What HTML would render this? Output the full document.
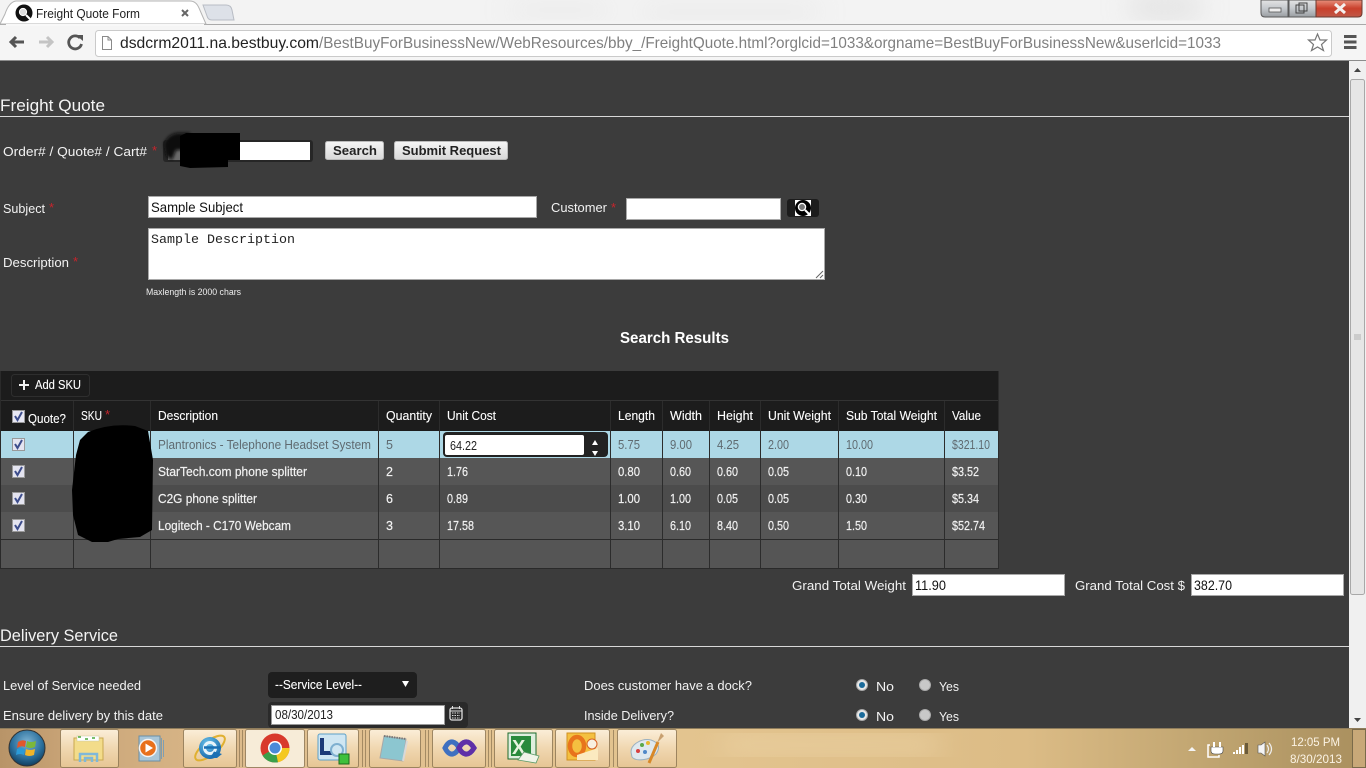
<!DOCTYPE html>
<html><head><meta charset="utf-8"><title>Freight Quote Form</title>
<style>
html,body{margin:0;padding:0;width:1366px;height:768px;overflow:hidden;background:#3c3c3c}
svg{display:block}
text{font-family:"Liberation Sans",sans-serif;font-size:13px;fill:#f2f2f2}
.h{font-size:17px;fill:#f4f4f4}
.r{fill:#c8242c;font-size:13px}
.t{font-size:12.5px;fill:#f2f2f2;stroke:#f2f2f2;stroke-width:.18px}
.b{font-size:12.5px;fill:#5f6a70}
.d{font-size:14px;fill:#111}
.m{font-size:12.5px;fill:#fff;stroke:#fff;stroke-width:.1px}
</style></head><body>
<svg width="1366" height="768" viewBox="0 0 1366 768" xmlns="http://www.w3.org/2000/svg">
<defs>
<linearGradient id="tb" x1="0" y1="0" x2="1" y2="0">
<stop offset="0" stop-color="#b89468"/><stop offset=".05" stop-color="#c9a477"/><stop offset=".2" stop-color="#e0bf90"/><stop offset=".5" stop-color="#e3c48f"/><stop offset=".75" stop-color="#dcbc86"/><stop offset=".9" stop-color="#bda26e"/><stop offset="1" stop-color="#a98f5e"/>
</linearGradient>
<linearGradient id="btn" x1="0" y1="0" x2="0" y2="1"><stop offset="0" stop-color="#fbeed8"/><stop offset=".5" stop-color="#f0d7b0"/><stop offset="1" stop-color="#e6c594"/></linearGradient>
<linearGradient id="gb" x1="0" y1="0" x2="0" y2="1"><stop offset="0" stop-color="#f6f6f6"/><stop offset="1" stop-color="#d8d8d8"/></linearGradient>
<linearGradient id="cl" x1="0" y1="0" x2="0" y2="1"><stop offset="0" stop-color="#e8907c"/><stop offset=".5" stop-color="#c9402c"/><stop offset="1" stop-color="#c05848"/></linearGradient>
<linearGradient id="wb" x1="0" y1="0" x2="0" y2="1"><stop offset="0" stop-color="#e4e4e4"/><stop offset=".5" stop-color="#c4c8cc"/><stop offset="1" stop-color="#9a9ea2"/></linearGradient>
<radialGradient id="orb" cx=".5" cy=".35" r=".7"><stop offset="0" stop-color="#7fb4d4"/><stop offset=".6" stop-color="#2a6f9c"/><stop offset="1" stop-color="#0c3350"/></radialGradient>
<radialGradient id="ie" cx=".4" cy=".3" r=".8"><stop offset="0" stop-color="#6cc4ec"/><stop offset="1" stop-color="#0e5fa4"/></radialGradient>
<filter id="bl"><feGaussianBlur stdDeviation="1.5"/></filter>
<filter id="bl2"><feGaussianBlur stdDeviation="14"/></filter>
</defs>

<!-- browser frame -->
<rect width="1366" height="61" fill="#f3f3f3"/>
<g filter="url(#bl2)" fill="#d8d8d8" opacity=".7">
<rect x="510" y="6" width="100" height="8"/><rect x="640" y="8" width="180" height="8"/><rect x="1130" y="-4" width="70" height="22"/>
</g>
<rect x="0" y="24" width="1366" height="1" fill="#a9a9a9"/>
<rect x="0" y="25" width="1366" height="35" fill="#f5f5f5"/>
<rect x="0" y="60" width="1366" height="1" fill="#8c8c8c"/>
<path d="M0 24L5 14Q9 2 16 1H190Q196 1 199 8L206 24Z" fill="#fff" stroke="#b4b4b4"/>
<rect x="6" y="24" width="198" height="2" fill="#f8f8f8"/>
<path d="M203 5H226Q231 5 232 10L234 20H212Q208 20 207 16Z" fill="#dde1e8" stroke="#b8bcc4"/>
<circle cx="24" cy="13" r="8.5" fill="#111"/><circle cx="23" cy="12" r="3.6" fill="#ddd" stroke="#fff"/><path d="M26 15L30 19" stroke="#fff" stroke-width="2"/>
<text x="36" y="18" style="font-size:12.5px;fill:#222" textLength="104" lengthAdjust="spacingAndGlyphs">Freight Quote Form</text>
<path d="M182 10L188 16M188 10L182 16" stroke="#666" stroke-width="2"/>

<!-- window buttons -->
<path d="M1261 0V13Q1261 17 1265 17H1288V0Z" fill="url(#wb)" stroke="#5a5a5a"/>
<rect x="1289" y="0" width="27" height="17" fill="url(#wb)" stroke="#5a5a5a"/>
<path d="M1316 0V17H1358Q1362 17 1362 13V0Z" fill="url(#cl)" stroke="#6a3a30"/>
<rect x="1269" y="8" width="12" height="4" fill="#eee" stroke="#555" stroke-width=".8"/>
<rect x="1296" y="5" width="8" height="8" fill="none" stroke="#444"/><rect x="1299" y="3" width="8" height="8" fill="none" stroke="#444"/>
<path d="M1335 4L1345 13M1345 4L1335 13" stroke="#f4f0ee" stroke-width="3"/>

<!-- toolbar -->
<path d="M24 42H11M16 37L11 42L16 47" fill="none" stroke="#555" stroke-width="3"/>
<path d="M39 42H52M47 37L52 42L47 47" fill="none" stroke="#c4c4c4" stroke-width="3"/>
<path d="M80 38A6.5 6.5 0 1 0 81.5 44" fill="none" stroke="#555" stroke-width="2.8"/><path d="M76 35H83V41Z" fill="#555"/>
<rect x="95.500" y="30.500" width="1236" height="26" rx="3" fill="#fff" stroke="#cacaca"/>
<path d="M102.500 36.500H108L111.500 40V49.500H102.500ZM108 36.500V40H111.500" fill="#fff" stroke="#8a8a8a"/>
<text x="120" y="48" style="font-size:16px;fill:#222" textLength="199" lengthAdjust="spacingAndGlyphs">dsdcrm2011.na.bestbuy.com</text>
<text x="319" y="48" style="font-size:16px;fill:#808080" textLength="902" lengthAdjust="spacingAndGlyphs">/BestBuyForBusinessNew/WebResources/bby_/FreightQuote.html?orglcid=1033&amp;orgname=BestBuyForBusinessNew&amp;userlcid=1033</text>
<path d="M1317.500 34L1320 40H1326.500L1321.500 44.500L1323.500 50.500L1317.500 47L1311.500 50.500L1313.500 44.500L1308.500 40H1315Z" fill="#fff" stroke="#777" stroke-width="1.200"/>
<path d="M1344 36.500H1356.500M1344 42H1356.500M1344 47.500H1356.500" stroke="#555" stroke-width="3"/>

<!-- page -->
<rect x="0" y="61" width="1349" height="667" fill="#3c3c3c"/>
<rect x="1349" y="61" width="17" height="667" fill="#f0f0f0"/>
<path d="M1354 72L1357.500 68L1361 72Z" fill="#444"/>
<rect x="1350.500" y="79.500" width="14" height="515" rx="2" fill="#e6e6e6" stroke="#a8a8a8"/>
<path d="M1354 335H1361M1354 337H1361M1354 339H1361" stroke="#b0b0b0"/>
<path d="M1354 718L1357.500 722L1361 718Z" fill="#444"/>

<text x="0" y="111" class="h" textLength="105" lengthAdjust="spacingAndGlyphs">Freight Quote</text>
<rect x="0" y="116" width="1349" height="1" fill="#d8d8d8"/>

<text x="3" y="156" textLength="144" lengthAdjust="spacingAndGlyphs">Order# / Quote# / Cart#</text>
<text x="152" y="155" class="r">*</text>
<rect x="163" y="140" width="150" height="22" rx="3" fill="#262626"/>
<rect x="168" y="142" width="142" height="18" fill="#fff"/>
<rect x="168" y="142" width="14" height="18" fill="#6a6a6a"/>
<path d="M164 144Q168 134 178 133H190V150H176L172 160L166 156Z" fill="#0a0a0a" filter="url(#bl)"/>
<path d="M180 136L186 133H240V160H228V167L190 168L180 166Z" fill="#000"/>

<rect x="325.500" y="141.500" width="58" height="18" rx="2" fill="url(#gb)" stroke="#bbb"/>
<text x="333" y="155" style="font-size:13px;font-weight:bold;fill:#222" textLength="44" lengthAdjust="spacingAndGlyphs">Search</text>
<rect x="394.500" y="141.500" width="113" height="18" rx="2" fill="url(#gb)" stroke="#bbb"/>
<text x="402" y="155" style="font-size:13px;font-weight:bold;fill:#222" textLength="99" lengthAdjust="spacingAndGlyphs">Submit Request</text>

<text x="3" y="213" textLength="42" lengthAdjust="spacingAndGlyphs">Subject</text><text x="49" y="212" class="r">*</text>
<rect x="148.500" y="196.500" width="388" height="21" fill="#fff" stroke="#a8a8a8"/>
<text x="151" y="212" class="d" textLength="92" lengthAdjust="spacingAndGlyphs">Sample Subject</text>
<text x="551" y="212" textLength="56" lengthAdjust="spacingAndGlyphs">Customer</text><text x="611" y="212" class="r">*</text>
<rect x="626.500" y="198.500" width="154" height="21" fill="#fff" stroke="#a8a8a8"/>
<rect x="787" y="199" width="32" height="18" rx="3" fill="#1c1c1c"/>
<rect x="795" y="200" width="16" height="16" fill="#fff"/>
<circle cx="803" cy="208" r="8" fill="#000"/><circle cx="802" cy="207" r="3.600" fill="#777" stroke="#fff" stroke-width="1.300"/><path d="M805 210L809 214" stroke="#fff" stroke-width="2"/>

<text x="3" y="267" textLength="66" lengthAdjust="spacingAndGlyphs">Description</text><text x="73" y="266" class="r">*</text>
<rect x="148.500" y="228.500" width="676" height="51" fill="#fff" stroke="#a8a8a8"/>
<text x="151" y="243" style="font-family:'Liberation Mono',monospace;font-size:13.330px;fill:#222">Sample Description</text>
<path d="M816 278L823 271M820 278L823 275" stroke="#666"/>
<text x="146" y="295" style="font-size:9.500px;fill:#eee" textLength="95" lengthAdjust="spacingAndGlyphs">Maxlength is 2000 chars</text>

<text x="620" y="343" style="font-size:16px;font-weight:bold;fill:#fff" textLength="109" lengthAdjust="spacingAndGlyphs">Search Results</text>

<!-- table -->
<rect x="0" y="371" width="999" height="198" fill="#2a2a2a"/>
<rect x="1" y="371" width="997" height="60" fill="#1c1c1c"/>
<rect x="1" y="400" width="997" height="1" fill="#333"/>
<rect x="11.500" y="374.500" width="78" height="22" rx="3" fill="#1c1c1c" stroke="#2e2e2e"/>
<path d="M24 380V390M19 385H29" stroke="#f0f0f0" stroke-width="2"/>
<text x="35" y="389" class="m" textLength="46" lengthAdjust="spacingAndGlyphs">Add SKU</text>

<rect x="1" y="431" width="997" height="27" fill="#add8e6"/>
<rect x="1" y="458" width="997" height="27" fill="#565656"/>
<rect x="1" y="485" width="997" height="27" fill="#4c4c4c"/>
<rect x="1" y="512" width="997" height="27" fill="#565656"/>
<rect x="1" y="539" width="997" height="1" fill="#2a2a2a"/>
<rect x="1" y="540" width="997" height="28" fill="#555"/>
<g stroke="#2c2c2c">
<path d="M73.500 401V568M150.500 401V568M378.500 401V568M439.500 401V568M610.500 401V568M662.500 401V568M709.500 401V568M760.500 401V568M838.500 401V568M944.500 401V568M998.500 371V568"/>
</g>

<!-- header -->
<g><rect x="12.500" y="410.500" width="12" height="12" fill="#e8e8f4" stroke="#999"/><path d="M15 416L17.500 420L22 412" fill="none" stroke="#3d4d8c" stroke-width="2"/></g>
<text x="28" y="423" class="m" textLength="38" lengthAdjust="spacingAndGlyphs">Quote?</text>
<text x="81" y="420" class="m" textLength="21" lengthAdjust="spacingAndGlyphs">SKU</text><text x="105" y="419" class="r">*</text>
<text x="158" y="420" class="m" textLength="60" lengthAdjust="spacingAndGlyphs">Description</text>
<text x="386" y="420" class="m" textLength="46" lengthAdjust="spacingAndGlyphs">Quantity</text>
<text x="447" y="420" class="m" textLength="49" lengthAdjust="spacingAndGlyphs">Unit Cost</text>
<text x="618" y="420" class="m" textLength="37" lengthAdjust="spacingAndGlyphs">Length</text>
<text x="670" y="420" class="m" textLength="32" lengthAdjust="spacingAndGlyphs">Width</text>
<text x="717" y="420" class="m" textLength="36" lengthAdjust="spacingAndGlyphs">Height</text>
<text x="768" y="420" class="m" textLength="63" lengthAdjust="spacingAndGlyphs">Unit Weight</text>
<text x="846" y="420" class="m" textLength="91" lengthAdjust="spacingAndGlyphs">Sub Total Weight</text>
<text x="952" y="420" class="m" textLength="29" lengthAdjust="spacingAndGlyphs">Value</text>

<!-- row checkboxes -->
<g fill="#e4e4f0" stroke="#999">
<rect x="12.500" y="438.500" width="12" height="12"/><rect x="12.500" y="465.500" width="12" height="12"/><rect x="12.500" y="492.500" width="12" height="12"/><rect x="12.500" y="519.500" width="12" height="12"/>
</g>
<g fill="none" stroke="#3d4d8c" stroke-width="2">
<path d="M15 444L17.500 448L22 440"/><path d="M15 471L17.500 475L22 467"/><path d="M15 498L17.500 502L22 494"/><path d="M15 525L17.500 529L22 521"/>
</g>

<!-- row 1 -->
<text x="158" y="449" class="b" textLength="213" lengthAdjust="spacingAndGlyphs">Plantronics - Telephone Headset System</text>
<text x="386" y="449" class="b">5</text>
<rect x="443" y="432" width="165" height="25" rx="4" fill="#222"/>
<rect x="445" y="435" width="139" height="20" rx="2" fill="#fff"/>
<text x="450" y="450" style="font-size:12.500px;fill:#222" textLength="27" lengthAdjust="spacingAndGlyphs">64.22</text>
<path d="M592 445L595 440L598 445ZM592 451L595 456L598 451Z" fill="#fff"/>
<text x="618" y="449" class="b" textLength="22" lengthAdjust="spacingAndGlyphs">5.75</text>
<text x="670" y="449" class="b" textLength="22" lengthAdjust="spacingAndGlyphs">9.00</text>
<text x="717" y="449" class="b" textLength="22" lengthAdjust="spacingAndGlyphs">4.25</text>
<text x="768" y="449" class="b" textLength="21" lengthAdjust="spacingAndGlyphs">2.00</text>
<text x="846" y="449" class="b" textLength="27" lengthAdjust="spacingAndGlyphs">10.00</text>
<text x="952" y="449" class="b" textLength="38" lengthAdjust="spacingAndGlyphs">$321.10</text>

<!-- row 2 -->
<text x="158" y="476" class="t" textLength="149" lengthAdjust="spacingAndGlyphs">StarTech.com phone splitter</text>
<text x="386" y="476" class="t">2</text>
<text x="447" y="476" class="t" textLength="21" lengthAdjust="spacingAndGlyphs">1.76</text>
<text x="618" y="476" class="t" textLength="22" lengthAdjust="spacingAndGlyphs">0.80</text>
<text x="670" y="476" class="t" textLength="21" lengthAdjust="spacingAndGlyphs">0.60</text>
<text x="717" y="476" class="t" textLength="21" lengthAdjust="spacingAndGlyphs">0.60</text>
<text x="768" y="476" class="t" textLength="21" lengthAdjust="spacingAndGlyphs">0.05</text>
<text x="846" y="476" class="t" textLength="21" lengthAdjust="spacingAndGlyphs">0.10</text>
<text x="952" y="476" class="t" textLength="27" lengthAdjust="spacingAndGlyphs">$3.52</text>

<!-- row 3 -->
<text x="158" y="503" class="t" textLength="99" lengthAdjust="spacingAndGlyphs">C2G phone splitter</text>
<text x="386" y="503" class="t">6</text>
<text x="447" y="503" class="t" textLength="21" lengthAdjust="spacingAndGlyphs">0.89</text>
<text x="618" y="503" class="t" textLength="22" lengthAdjust="spacingAndGlyphs">1.00</text>
<text x="670" y="503" class="t" textLength="21" lengthAdjust="spacingAndGlyphs">1.00</text>
<text x="717" y="503" class="t" textLength="21" lengthAdjust="spacingAndGlyphs">0.05</text>
<text x="768" y="503" class="t" textLength="21" lengthAdjust="spacingAndGlyphs">0.05</text>
<text x="846" y="503" class="t" textLength="21" lengthAdjust="spacingAndGlyphs">0.30</text>
<text x="952" y="503" class="t" textLength="27" lengthAdjust="spacingAndGlyphs">$5.34</text>

<!-- row 4 -->
<text x="158" y="530" class="t" textLength="133" lengthAdjust="spacingAndGlyphs">Logitech - C170 Webcam</text>
<text x="386" y="530" class="t">3</text>
<text x="447" y="530" class="t" textLength="27" lengthAdjust="spacingAndGlyphs">17.58</text>
<text x="618" y="530" class="t" textLength="22" lengthAdjust="spacingAndGlyphs">3.10</text>
<text x="670" y="530" class="t" textLength="21" lengthAdjust="spacingAndGlyphs">6.10</text>
<text x="717" y="530" class="t" textLength="21" lengthAdjust="spacingAndGlyphs">8.40</text>
<text x="768" y="530" class="t" textLength="21" lengthAdjust="spacingAndGlyphs">0.50</text>
<text x="846" y="530" class="t" textLength="21" lengthAdjust="spacingAndGlyphs">1.50</text>
<text x="952" y="530" class="t" textLength="33" lengthAdjust="spacingAndGlyphs">$52.74</text>

<!-- redaction scribble over SKU -->
<path d="M88 432Q110 423 135 426L148 431L153 460L152 530L140 537L118 539L108 542H92L78 535L73 515L72 490L76 455L80 440Z" fill="#000"/>

<!-- totals -->
<text x="792" y="590" textLength="114" lengthAdjust="spacingAndGlyphs">Grand Total Weight</text>
<rect x="912.500" y="574.500" width="152" height="21" fill="#fff" stroke="#a8a8a8"/>
<text x="915" y="590" class="d" textLength="31" lengthAdjust="spacingAndGlyphs">11.90</text>
<text x="1075" y="590" textLength="110" lengthAdjust="spacingAndGlyphs">Grand Total Cost $</text>
<rect x="1191.500" y="574.500" width="152" height="21" fill="#fff" stroke="#a8a8a8"/>
<text x="1194" y="590" class="d" textLength="38" lengthAdjust="spacingAndGlyphs">382.70</text>

<text x="0" y="641" class="h" textLength="118" lengthAdjust="spacingAndGlyphs">Delivery Service</text>
<rect x="0" y="646" width="1349" height="1" fill="#d8d8d8"/>

<text x="3" y="690" textLength="138" lengthAdjust="spacingAndGlyphs">Level of Service needed</text>
<rect x="268" y="672" width="149" height="26" rx="4" fill="#1e1e1e"/>
<text x="275" y="689" class="m" textLength="87" lengthAdjust="spacingAndGlyphs">--Service Level--</text>
<path d="M402 681H409L405.500 687Z" fill="#fff"/>

<text x="3" y="720" textLength="160" lengthAdjust="spacingAndGlyphs">Ensure delivery by this date</text>
<rect x="268" y="702" width="200" height="26" rx="4" fill="#2a2a2a"/>
<rect x="271.500" y="705.500" width="173" height="19" fill="#fff" stroke="#999"/>
<text x="275" y="719" style="font-size:12.500px;fill:#222" textLength="58" lengthAdjust="spacingAndGlyphs">08/30/2013</text>
<rect x="450" y="708" width="12" height="12" rx="2" fill="none" stroke="#ddd" stroke-width="1.300"/>
<path d="M450 711H462M452.500 706V709M459.500 706V709" stroke="#ddd"/>
<path d="M452 713H460M452 715.500H460M452 718H460" stroke="#ddd" stroke-dasharray="1.500 1"/>

<text x="584" y="690" textLength="168" lengthAdjust="spacingAndGlyphs">Does customer have a dock?</text>
<text x="584" y="720" textLength="90" lengthAdjust="spacingAndGlyphs">Inside Delivery?</text>
<g>
<circle cx="862" cy="685" r="5.500" fill="#e8e8e8" stroke="#aaa"/><circle cx="862" cy="685" r="3" fill="#1a6a9a"/>
<circle cx="862" cy="715" r="5.500" fill="#e8e8e8" stroke="#aaa"/><circle cx="862" cy="715" r="3" fill="#1a6a9a"/>
<circle cx="925" cy="685" r="5.500" fill="#c8c8c8" stroke="#aaa"/>
<circle cx="925" cy="715" r="5.500" fill="#c8c8c8" stroke="#aaa"/>
</g>
<text x="876" y="691" textLength="18" lengthAdjust="spacingAndGlyphs">No</text><text x="939" y="691" textLength="20" lengthAdjust="spacingAndGlyphs">Yes</text>
<text x="876" y="721" textLength="18" lengthAdjust="spacingAndGlyphs">No</text><text x="939" y="721" textLength="20" lengthAdjust="spacingAndGlyphs">Yes</text>

<!-- taskbar -->
<rect x="0" y="728" width="1366" height="40" fill="url(#tb)"/>
<rect x="0" y="728" width="1366" height="1" fill="#8f7d5c"/>
<g filter="url(#bl2)" fill="#f0d9ae" opacity=".6"><rect x="720" y="735" width="220" height="20"/></g>
<g fill="url(#btn)" stroke="#8a7350" stroke-opacity=".8">
<rect x="60.500" y="729.500" width="58" height="38" rx="2"/>
<rect x="183.500" y="729.500" width="53" height="38" rx="2"/>
<rect x="245.500" y="729.500" width="59" height="38" rx="2" style="fill:#f7ecd8"/>
<rect x="307.500" y="729.500" width="51" height="38" rx="2"/>
<rect x="369.500" y="729.500" width="51" height="38" rx="2"/>
<rect x="432.500" y="729.500" width="53" height="38" rx="2"/>
<rect x="494.500" y="729.500" width="58" height="38" rx="2"/>
<rect x="555.500" y="729.500" width="54" height="38" rx="2"/>
<rect x="617.500" y="729.500" width="59" height="38" rx="2"/>
</g>
<path d="M239.500 730V767M242.500 730V767M362.500 730V767M365.500 730V767M425.500 730V767M428.500 730V767M488.500 730V767M491.500 730V767M613.500 730V767" stroke="#8a7350" stroke-opacity=".7"/>

<!-- start orb -->
<circle cx="27" cy="748" r="18" fill="url(#orb)" stroke="#333"/>
<path d="M18 742Q22 739 26 741L25 747Q21 745 17 748Z" fill="#e2572c"/>
<path d="M27 741Q31 743 36 741L35 747Q30 749 26 747Z" fill="#7cb83a"/>
<path d="M17 749Q21 747 25 749L24 755Q20 753 16 755Z" fill="#2a9bd8"/>
<path d="M26 749Q30 751 35 749L34 755Q29 757 25 755Z" fill="#f0b428"/>

<!-- folder -->
<path d="M74 738H103V760H74Z" fill="#f3dc8a" stroke="#c8a850"/>
<rect x="77" y="736" width="22" height="5" fill="#fff" stroke="#c8c8a0" stroke-width=".5"/>
<path d="M78 737H81M85 739H88M92 738H95" stroke="#4caa3c" stroke-width="1.500"/>
<path d="M80 762V754H97V762M85 762V758H92V762" fill="none" stroke="#7fb8d8" stroke-width="2.500"/>
<!-- media player -->
<rect x="139" y="736" width="21" height="25" fill="#a9c6d8" stroke="#6a8ea4"/>
<circle cx="148" cy="748" r="8.500" fill="#e8701c" stroke="#f4f4f4" stroke-width="1.500"/>
<path d="M145.500 743.500L153 748L145.500 752.500Z" fill="#fff"/>
<path d="M161.500 738V759M163.500 740V757" stroke="#7f9eb2"/>
<!-- IE -->
<ellipse cx="210" cy="748" rx="18" ry="7" fill="none" stroke="#e0b030" stroke-width="2" transform="rotate(-38 210 748)"/>
<circle cx="210" cy="748" r="11" fill="url(#ie)"/>
<circle cx="210" cy="748" r="5.500" fill="none" stroke="#e8f4fa" stroke-width="3"/>
<path d="M204 747.500H221" stroke="#1a70b4" stroke-width="2.500"/>
<path d="M214 751.500L222 754L217 758H210Z" fill="#1a70b4"/>
<!-- Chrome -->
<circle cx="275" cy="748" r="14.500" fill="#d8392c"/>
<path d="M275 748L262.500 755.500A14.500 14.500 0 0 0 278 762.200Z" fill="#3aa04a"/>
<path d="M275 748L289.500 748A14.500 14.500 0 0 1 278 762.200Z" fill="#f4c820"/>
<circle cx="275" cy="748" r="7" fill="#fff"/><circle cx="275" cy="748" r="5.500" fill="#4a8ad8"/>
<!-- Lync -->
<rect x="318" y="734" width="28" height="26" rx="2" fill="#cfe6f2" stroke="#5da0c8"/>
<path d="M322 738V753H332" fill="none" stroke="#1c3a78" stroke-width="4"/>
<circle cx="337" cy="750" r="6" fill="none" stroke="#7fb0d0" stroke-width="2"/>
<rect x="339" y="754" width="10" height="10" fill="#3ec03c" stroke="#1c6a1c"/>
<!-- Notepad -->
<path d="M384 736L406 739L403 761L380 758Z" fill="#8cc6d0" stroke="#a8a8a8"/>
<path d="M384 736L406 739" stroke="#777" stroke-width="2" stroke-dasharray="1.500 1"/>
<path d="M403 761L407 741" stroke="#d8d8d8" stroke-width="2"/>
<!-- VS -->
<path d="M445 748C450 738 456 742 459 748C462 754 468 758 474 748C468 738 462 742 459 748C456 754 450 758 445 748Z" fill="none" stroke="#3f70c0" stroke-width="5"/>
<path d="M459 748C462 742 468 738 474 748C468 758 462 754 459 748Z" fill="none" stroke="#5f2fa8" stroke-width="5"/>
<!-- Excel -->
<rect x="508" y="733" width="28" height="26" fill="#dfeede" stroke="#1c6a2c"/>
<rect x="511" y="736" width="20" height="20" fill="#2a8a3c"/>
<text x="512" y="754" style="font-size:20px;font-weight:bold;fill:#e8f4e0">X</text>
<path d="M524 752L539 756L536 763L518 760Z" fill="#f0f4e8" stroke="#5a9a68" stroke-width=".8"/>
<!-- Outlook -->
<rect x="567" y="733" width="28" height="27" fill="#f4c040" stroke="#d09020"/>
<ellipse cx="577" cy="746" rx="7" ry="9" fill="none" stroke="#e8741c" stroke-width="4.500"/>
<path d="M577 755L598 748V760H577Z" fill="#fbeac0"/>
<circle cx="592" cy="744" r="5" fill="#f8f0e0" stroke="#d86020"/>
<!-- Paint -->
<path d="M631 752C631 744 642 738 651 740C660 743 660 748 656 754C650 760 636 762 632 757Z" fill="#dfe8ee" stroke="#9ab0c0"/>
<circle cx="638" cy="751" r="2" fill="#d84040"/><circle cx="642" cy="745" r="2" fill="#5aa84a"/><circle cx="648" cy="743" r="2" fill="#e8b830"/><circle cx="645" cy="752" r="2" fill="#5088c8"/>
<path d="M649 763L658 742" stroke="#d88828" stroke-width="3"/>
<path d="M657 743L661 733L664 736Z" fill="#c8a070"/>

<!-- tray -->
<path d="M1188 751L1192 747L1196 751Z" fill="#f4f4f4"/>
<path d="M1210 745H1208V757H1219V755" fill="none" stroke="#fff" stroke-width="1.500"/>
<path d="M1211 747H1223V751Q1223 754 1219 754H1215Q1211 754 1211 751Z" fill="#fff" stroke="#444" stroke-width=".6"/>
<path d="M1214 742V747M1220 742V747" stroke="#fff" stroke-width="2"/>
<path d="M1233 754H1235V752H1233ZM1236 754H1238V750H1236ZM1239 754H1241V747H1239ZM1242 754H1244V745H1242Z" fill="#fff"/>
<rect x="1245" y="743" width="3" height="11" fill="#6a5a3a"/>
<path d="M1258 745H1261L1265 742V756L1261 753H1258Z" fill="#f4f4f4" stroke="#555" stroke-width=".6"/>
<path d="M1267 745Q1270 749 1267 753M1269 743Q1274 749 1269 755" fill="none" stroke="#eee" stroke-width="1.200"/>
<text x="1291" y="746" style="font-size:12px;fill:#fbf3e4" textLength="49" lengthAdjust="spacingAndGlyphs">12:05 PM</text>
<text x="1290" y="763" style="font-size:12px;fill:#fbf3e4" textLength="52" lengthAdjust="spacingAndGlyphs">8/30/2013</text>
<rect x="1352.500" y="729.500" width="13" height="38" fill="#c8a878" stroke="#7a6a4a"/>
</svg>
</body></html>
